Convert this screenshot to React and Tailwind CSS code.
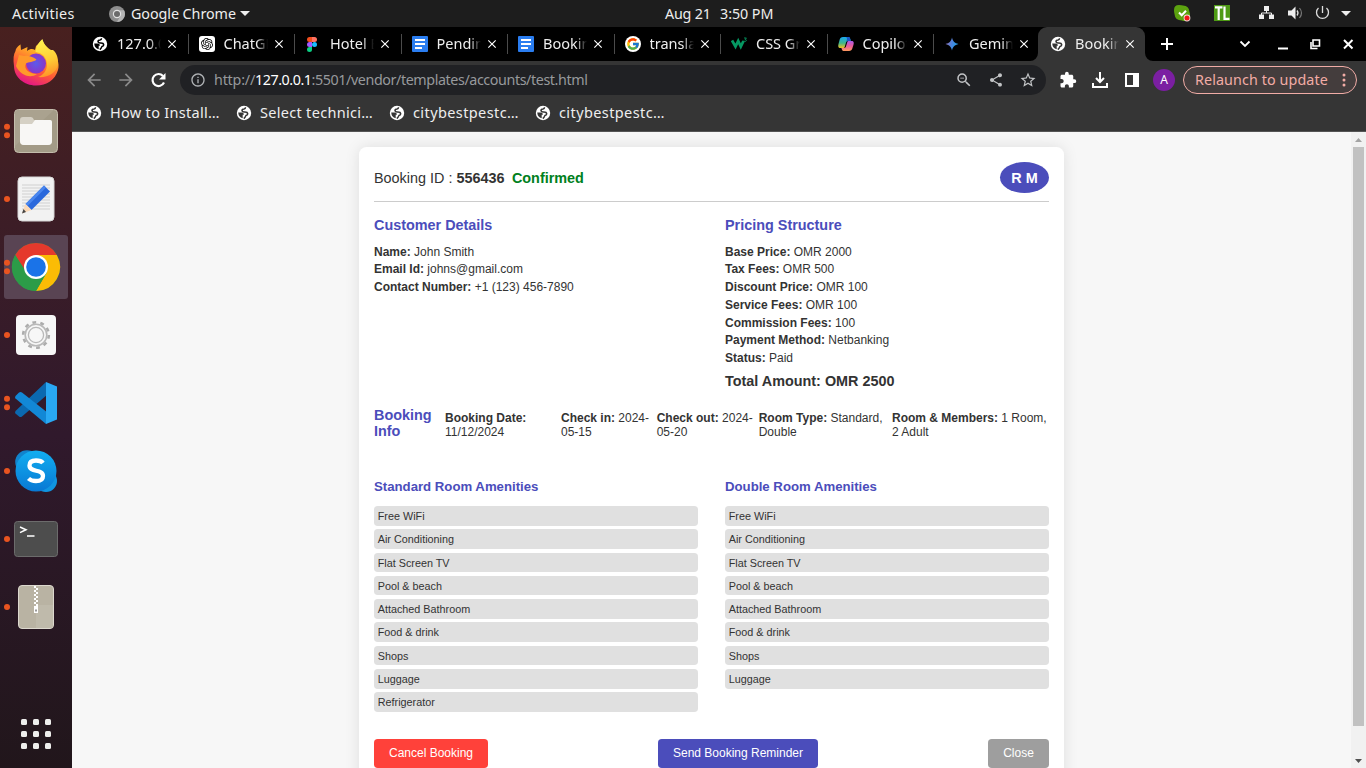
import React from "react";
import {
  MdExtension, MdZoomOut, MdShare, MdStarBorder, MdInfoOutline,
  MdArrowBack, MdArrowForward, MdClose,
} from "react-icons/md";
import { SiOpenai } from "react-icons/si";
import { FcGoogle } from "react-icons/fc";

const Figma = () => (
  <svg width="10" height="15" viewBox="0 0 10 15" className="ml-[2px]">
    <path d="M2.5 0H5v5H2.5a2.5 2.5 0 0 1 0-5z" fill="#f24e1e" />
    <path d="M5 0h2.5a2.5 2.5 0 0 1 0 5H5z" fill="#ff7262" />
    <path d="M2.5 5H5v5H2.5a2.5 2.5 0 0 1 0-5z" fill="#a259ff" />
    <circle cx="7.5" cy="7.5" r="2.5" fill="#1abcfe" />
    <path d="M2.5 10H5v2.5A2.5 2.5 0 1 1 2.5 10z" fill="#0acf83" />
  </svg>
);
const Docs = () => (
  <svg width="16" height="16" viewBox="0 0 16 16">
    <rect width="16" height="16" rx="1" fill="#2a7df0" />
    <path d="M3 4h10M3 8h10M3 12h7" stroke="#fff" strokeWidth="2" />
  </svg>
);
const Google = () => (
  <span className="flex h-4 w-4 items-center justify-center rounded-full bg-white"><FcGoogle size={14} /></span>
);
const OpenAI = () => (
  <span className="flex h-4 w-4 items-center justify-center rounded-[3px] bg-white text-black"><SiOpenai size={12} /></span>
);
const W3 = () => (
  <svg width="16" height="16" viewBox="0 0 16 16" fill="none" stroke="#059862">
    <path d="M1 4.500l3.500 6L7.200 5l2.600 5.500L12.500 5" strokeWidth="2.800" />
    <path d="M13 2h2.400l-1.200 1.400c1.600 0 1.500 2 0 2-.8 0-1.200-.3-1.400-.8" strokeWidth=".9" />
  </svg>
);
const Copilot = () => (
  <svg width="16" height="16" viewBox="0 0 16 16">
    <defs>
      <linearGradient id="cpa" x1="0" y1="0" x2="0" y2="1"><stop stopColor="#1aa6f0" /><stop offset=".55" stopColor="#3db68a" /><stop offset="1" stopColor="#f4c120" /></linearGradient>
      <linearGradient id="cpb" x1="0" y1="0" x2="0" y2="1"><stop stopColor="#a85be8" /><stop offset=".5" stopColor="#e85a9c" /><stop offset="1" stopColor="#ff9a5c" /></linearGradient>
    </defs>
    <path d="M5 1h5.500c1.200 0 1.500 1 1.900 2.500L12.700 5H10c-1.200 0-1.700.6-2 1.700L6.700 11C6.500 11.700 6 12 5 12H2.500C0 12 0 9.800.5 8L1.700 3.500C2.200 2 3 1 5 1z" fill="url(#cpa)" />
    <path d="M10.500 1c1.200 0 1.500 1 1.900 2.500L12.700 5H10c-.8 0-1.300.3-1.600.8L9 3C9.200 2 8.500 1 7.700 1z" fill="#1858c8" />
    <path d="M11 15H5.500c-1.200 0-1.500-1-1.900-2.500L3.300 12H6c1.200 0 1.700-.6 2-1.700L9.300 6C9.500 5.300 10 5 11 5h2.500C16 5 16 7 15.500 8.800l-1.200 3.700C13.800 14 13 15 11 15z" fill="url(#cpb)" />
  </svg>
);
const Gemini = () => (
  <svg width="16" height="16" viewBox="0 0 16 16">
    <defs><linearGradient id="gem" x1="0" y1=".3" x2="1" y2=".6"><stop offset=".1" stopColor="#8a72b8" /><stop offset=".5" stopColor="#4a86e0" /><stop offset="1" stopColor="#1ba1e3" /></linearGradient></defs>
    <path d="M8 1.500C9 5.500 10.500 7 14.500 8 10.500 9 9 10.500 8 14.500 7 10.500 5.500 9 1.500 8 5.500 7 7 5.500 8 1.500z" fill="url(#gem)" />
  </svg>
);
const Globe = ({ ink = "#000", className = "" }) => (
  <svg width="16" height="16" viewBox="0 0 16 16" className={className}>
    <circle cx="8" cy="8" r="7.200" fill="#fff" />
    <path d="M9.500 2.200Q9.500 3.700 8 3.900 5.900 4.100 6 5.700 6.200 7.200 8.300 7.100 11.500 6.900 11.700 8.900 11.500 10.400 9.900 10.600 9.400 12.200 7.800 13.600" fill="none" stroke={ink} strokeWidth="1.500" />
    <path d="M2.200 7.400h3.300q2.700.3 2.300 2.300H6.700v3.500Q2.500 11.800 2.200 7.400z" fill={ink} />
  </svg>
);
const ActiveGlobe = () => <Globe ink="#353535" />;

const tabs = [
  ["127.0.0.1", Globe], ["ChatGPT", OpenAI], ["Hotel B", Figma], ["Pending", Docs], ["Booking", Docs],
  ["transla", Google], ["CSS Gri", W3], ["Copilot", Copilot], ["Gemini", Gemini],
];

function TabBody({ label, Icon }) {
  return (
    <>
      <span className="flex w-4 shrink-0 items-center">{React.createElement(Icon)}</span>
      <span className="ml-[9px] w-[44px] overflow-hidden whitespace-nowrap text-[14.500px] text-[#eeeeee] [mask-image:linear-gradient(to_right,#000_74%,transparent_100%)]">{label}</span>
      <MdClose size={14} className="ml-[4px] shrink-0 text-white" />
    </>
  );
}

function Tabs() {
  return (
    <div className="flex h-[34px] bg-black pl-[10px]">
      <div className="flex w-[956px] shrink-0">
        {tabs.map(([label, Icon], i) => (
          <div key={i} className="flex w-[106.500px] shrink-0 items-center pl-[10px]">
            <TabBody label={label} Icon={Icon} />
            {i < 8 && <span className="ml-auto h-5 w-px bg-[#4b4b4b]" />}
          </div>
        ))}
      </div>
      <div className="relative flex w-[107px] shrink-0 items-center rounded-t-[9px] bg-[#353535] pl-[12px]">
        <TabBody label="Booking" Icon={ActiveGlobe} />
        <svg width="8" height="8" viewBox="0 0 8 8" className="absolute bottom-0 -left-2"><path d="M8 0v8H0a8 8 0 0 0 8-8z" fill="#353535" /></svg>
        <svg width="8" height="8" viewBox="0 0 8 8" className="absolute -right-2 bottom-0"><path d="M0 0v8h8A8 8 0 0 1 0 0z" fill="#353535" /></svg>
      </div>
      <svg width="221" height="34" viewBox="1145 27 221 34" fill="none" stroke="#fff" strokeWidth="2" className="shrink-0">
        <path d="M1161 44h12M1167 38v12" />
        <path d="M1240.500 41.500l4.500 4.500 4.500-4.500" strokeWidth="1.800" />
        <path d="M1278 48.500h10" />
        <path d="M1313 40h6.500v6H1313z" strokeWidth="1.600" />
        <path d="M1311 42v6.500h6.500" strokeWidth="1.600" />
        <path d="M1344 40l8.500 8.500M1352.500 40l-8.500 8.500" />
      </svg>
    </div>
  );
}

function Toolbar() {
  return (
    <div className="flex h-[38px] items-center bg-[#353535] text-white">
      <MdArrowBack size={20} className="ml-[12px] text-[#8b8b8b]" />
      <MdArrowForward size={20} className="ml-[12px] text-[#8b8b8b]" />
      <svg width="21" height="20" viewBox="0 0 21 20" className="ml-[12px] shrink-0">
        <path d="M15 6A6 6 0 1 0 16 12.500" fill="none" stroke="#fff" strokeWidth="2.200" />
        <path d="M17.500 3v6.500H11z" fill="#fff" />
      </svg>
      <div className="ml-[11px] flex h-[30px] w-[866px] shrink-0 items-center rounded-full bg-[#202124] pl-[10px] pr-[9px]">
        <MdInfoOutline size={16} className="text-[#b0b3b6]" />
        <span className="ml-[8px] whitespace-nowrap text-[14.300px] tracking-[-0.430px] text-[#97999c]"><span className="tracking-[-0.200px]">http://</span><span className="tracking-[-0.450px] text-white">127.0.0.1</span><span className="tracking-[-0.410px]">:5501/vendor/templates/accounts/test.html</span></span>
        <MdZoomOut size={18} className="ml-auto text-[#c2c4c6]" />
        <MdShare size={16} className="ml-[15px] text-[#c2c4c6]" />
        <MdStarBorder size={18} className="ml-[15px] text-[#c2c4c6]" />
      </div>
      <MdExtension size={18} className="ml-[13px]" />
      <svg width="18" height="18" viewBox="0 0 18 18" fill="none" stroke="#fff" strokeWidth="2" className="ml-[14px]">
        <path d="M9 1v9M5 7l4 4 4-4M2 12v4h14v-4" />
      </svg>
      <svg width="16" height="16" viewBox="0 0 16 16" className="ml-[15px]"><path d="M1 1h14v14H1zM3 3v10h6V3z" fill="#fff" fillRule="evenodd" /></svg>
      <span className="ml-[13px] flex h-[22px] w-[22px] items-center justify-center rounded-full bg-[#7b1fa2] text-[12px]">A</span>
      <span className="ml-[8px] flex h-7 w-[174px] items-center rounded-full border border-[#f0aca6] bg-[#443d3d] pl-[11px] text-[#f2aca6]">
        <span className="whitespace-nowrap text-[14.300px] tracking-[0.110px]">Relaunch to update</span>
        <svg width="4" height="16" viewBox="0 0 4 16" fill="currentColor" className="ml-auto mr-[10px]"><circle cx="2" cy="3" r="1.500" /><circle cx="2" cy="8" r="1.500" /><circle cx="2" cy="13" r="1.500" /></svg>
      </span>
    </div>
  );
}

function Bookmarks() {
  return (
    <div className="flex h-[33px] items-center border-b border-[#555555] bg-[#353535] pb-[4px] pl-[14px] text-[14.500px] tracking-[0.350px] text-[#eeeeee]">
      <Globe ink="#353535" /><span className="ml-[8px] w-[118px] whitespace-nowrap tracking-[0.300px]">How to Install…</span>
      <Globe ink="#353535" className="ml-[8px]" /><span className="ml-[8px] w-[118px] whitespace-nowrap tracking-[0.300px]">Select technici…</span>
      <Globe ink="#353535" className="ml-[11px]" /><span className="ml-[8px] w-[118px] whitespace-nowrap tracking-[0.400px]">citybestpestc…</span>
      <Globe ink="#353535" className="ml-[4px]" /><span className="ml-[8px] w-[118px] whitespace-nowrap tracking-[0.400px]">citybestpestc…</span>
    </div>
  );
}

function TopBar() {
  return (
    <div className="flex h-[27px] shrink-0 items-center bg-[#1d1d1d] text-[14.300px] text-[#eeeeee]">
      <span className="ml-[12px] w-[97px] tracking-[0.300px]">Activities</span>
      <svg width="16" height="16" viewBox="0 0 16 16"><circle cx="8" cy="8" r="8" fill="#8d8d8d" /><path d="M8 4.200h7A8 8 0 0 1 8 16l3.400-6z" fill="#b4b4b4" /><circle cx="8" cy="8" r="4.200" fill="#e2e2e2" /><circle cx="8" cy="8" r="3" fill="#6b6b6b" /></svg>
      <span className="ml-[6px] w-[105px] whitespace-nowrap tracking-[-0.050px]">Google Chrome</span>
      <svg width="10" height="5" viewBox="0 0 10 5" className="ml-[4px]"><path d="M0 0h10L5 5z" fill="#eee" /></svg>
      <span className="ml-[415px] w-[55px] whitespace-nowrap tracking-[-0.200px]">Aug 21</span>
      <span className="w-[60px] whitespace-nowrap tracking-[-0.050px]">3:50 PM</span>
      <svg width="206" height="27" viewBox="1160 0 206 27" className="ml-auto shrink-0">
        <path d="M1174 10q0-5 5-5q3 0 4 .6q6 0 6.500 6.500q.8 2 .5 4q-.5 5-5 5q-2 0-3-.6q-7 0-7.500-6.500q-.5-2-.5-4z" fill="#5ca20f" />
        <path d="M1179 12.500l2.700 2.700 4.300-4.500" fill="none" stroke="#fff" strokeWidth="2" />
        <circle cx="1187" cy="18" r="3.400" fill="#f3dada" /><circle cx="1187" cy="18" r="2.500" fill="#f01818" />
        <rect x="1214" y="5" width="16" height="16" fill="#4e9a14" />
        <path d="M1215 7.300h7.500M1218.700 6.500V20M1224.500 6.500v12.300h5" stroke="#fff" strokeWidth="2.200" fill="none" />
        <path d="M1264 6h5v5h-5zM1259 14.500h5v4.500h-5zM1269 14.500h5v4.500h-5z" fill="#eee" />
        <path d="M1266.500 11v2M1261.500 15v-2h10v2" stroke="#eee" fill="none" />
        <path d="M1288 10.500h3.500l4-4v13l-4-4h-3.500z" fill="#eee" />
        <path d="M1297 10.500q2 2.500 0 5" stroke="#ddd" fill="none" strokeWidth="1.300" />
        <path d="M1299.500 8q4 5 0 10" stroke="#777" fill="none" strokeWidth="1.200" />
        <path d="M1318.500 8a6 6 0 1 0 8 0M1322.500 6v7" stroke="#ddd" fill="none" strokeWidth="1.300" />
        <path d="M1341 11h10l-5 5z" fill="#eee" />
      </svg>
    </div>
  );
}

const dock = [
  { dots: 0, art: (
    <>
      <defs>
        <linearGradient id="ff" x1=".8" y1="0" x2=".35" y2="1"><stop stopColor="#fff44f" /><stop offset=".35" stopColor="#ffa827" /><stop offset=".65" stopColor="#ff5a36" /><stop offset="1" stopColor="#e31587" /></linearGradient>
        <radialGradient id="ffb"><stop stopColor="#5b5bea" /><stop offset="1" stopColor="#8a35c8" /></radialGradient>
        <linearGradient id="ffy" x1=".3" y1="0" x2=".5" y2="1"><stop stopColor="#fff44f" /><stop offset=".6" stopColor="#ffcb35" /><stop offset="1" stopColor="#ff9228" /></linearGradient>
      </defs>
      <path d="M15.500 20C16 16 20.500 13.500 20.500 13.500L21 19 27.500 16 27 20C31 17 33 18 35 19L36 15 42.500 9Q44 14 50 20C57 25 60 32 58 39C55 49 47 54.500 36 54.500C24 54.500 14 46 14 35C13 28 13.500 23 15.500 20z" fill="url(#ff)" />
      <circle cx="36" cy="32.500" r="10" fill="url(#ffb)" />
      <path d="M42.500 8C43 13 48 17 51 19L53 19C57 22 58.500 28 58 33C57 42 47 47 38 46C49 42 49 30 43 24C39 21 35.500 21 35.500 21C36 17 37 13 42.500 8z" fill="url(#ffy)" />
      <path d="M19 24L24 25Q30 24 36.500 28.500C34 31.500 28 30.500 26 32.500C23 37.500 29 43 37 43C30 48 20 44 16 35z" fill="#ff9a2a" />
    </>) },
  { dots: 2, art: (
    <>
      <rect x="14.500" y="10.500" width="43" height="43" rx="4" fill="#a39b87" stroke="#c4bdac" />
      <path d="M15 47L54 11H19q-4 0-4 4z" fill="#aaa28f" />
      <path d="M20 21q0-3 3-3h8q2 0 3 3h15q3 0 3 3v18q0 4-4 4H24q-4 0-4-4z" fill="#d5d0c4" />
      <path d="M20 25h12l3-4h15q2 0 2 2v19q0 4-4 4H24q-4 0-4-4z" fill="#f8f7f5" />
    </>) },
  { dots: 1, art: (
    <>
      <rect x="18" y="10" width="36" height="44" rx="4" fill="#f2f2f2" stroke="#d7d7d7" />
      <path d="M22 18h28M22 21h28M22 24h28M22 27h28M22 30h28M22 33h28M22 36h28M22 39h28M22 42h28" stroke="#d0d0d0" />
      <path d="M25.500 37L44 18.500 50 24.500 31.500 43z" fill="#2a68dc" />
      <path d="M25.500 37L44 18.500 46 20.500 27.500 39z" fill="#4a86ee" />
      <path d="M25.500 37L31.500 43 22 46.500z" fill="#fbd9b8" /><path d="M23.500 42l2.500 3-4 1.500z" fill="#444" />
    </>) },
  { dots: 2, active: true, art: (
    <>
      <circle cx="36" cy="32" r="24" fill="#2c9c48" />
      <path d="M15.200 20A24 24 0 0 1 56.800 20H36L27 38z" fill="#e5392c" />
      <path d="M56.800 20A24 24 0 0 1 36 56L47 37 36 20z" fill="#fbbc05" />
      <path d="M15.200 20L25.600 38 36 44 46.400 38 36 56A24 24 0 0 1 15.200 20z" fill="#2c9c48" />
      <circle cx="36" cy="32" r="12" fill="#fff" /><circle cx="36" cy="32" r="9.800" fill="#1a73e8" />
    </>) },
  { dots: 1, art: (
    <>
      <rect x="16" y="12" width="40" height="40" rx="4" fill="#f7f7f7" />
      <circle cx="36" cy="32" r="12.800" fill="none" stroke="#adadad" strokeWidth="2.600" strokeDasharray="3.800 4.242" />
      <circle cx="36" cy="32" r="10.800" fill="none" stroke="#b9b9b9" strokeWidth="1.600" />
      <circle cx="36" cy="32" r="7.600" fill="none" stroke="#b9b9b9" strokeWidth="1.300" />
    </>) },
  { dots: 2, art: (
    <>
      <path d="M15.500 40L46 11 48 23 22 45.500q-1.500 1-3 0L15.500 42.500q-1-1 0-2.500z" fill="#0b69b0" />
      <path d="M15.500 25L19 21.500q1.500-1 3 0L48 42 46 53 15.500 27.500q-1-1 0-2.500z" fill="#1288d6" />
      <path d="M46 11L57 15.500V48.500L46 53z" fill="#29a8f3" />
    </>) },
  { dots: 1, art: (
    <>
      <defs><linearGradient id="sk" x1="0" y1="0" x2="0" y2="1"><stop stopColor="#12aef0" /><stop offset="1" stopColor="#0878d4" /></linearGradient></defs>
      <circle cx="27" cy="23" r="11.800" fill="#1183cc" /><circle cx="46" cy="42" r="11" fill="#1095e0" />
      <circle cx="36" cy="32" r="20.500" fill="url(#sk)" />
      <path d="M43 24Q41 21.500 36 21.500Q29.500 21.500 29.500 26.500C29.500 34 43 29.500 43 37Q43 42 36 42Q31 42 28.500 39.500" stroke="#fff" strokeWidth="4.300" fill="none" />
    </>) },
  { dots: 1, art: (
    <>
      <rect x="14.500" y="14.500" width="43" height="35" rx="3" fill="#4d4d4d" stroke="#6c6c6c" />
      <path d="M20 20l6 2.800-6 2.800M27 29h7.500" stroke="#fff" strokeWidth="1.500" fill="none" />
    </>) },
  { dots: 1, art: (
    <>
      <rect x="18.500" y="10.500" width="35" height="43" rx="3.500" fill="#b9b3a3" stroke="#dcd8ce" />
      <path d="M36 30h17v20q0 3-3 3H36z" fill="#bfbaab" />
      <path d="M35 11v20" stroke="#fff" strokeWidth="2" strokeDasharray="2 2" /><path d="M37 13v18" stroke="#fff" strokeWidth="2" strokeDasharray="2 2" />
      <path d="M34 31h4v7h-4z" fill="#fff" /><path d="M35 34.500h2v2h-2z" fill="#999" />
    </>) },
];

function Dock() {
  return (
    <div className="flex w-[72px] shrink-0 flex-col bg-linear-to-b from-[#48201f] via-[#30192c] via-55% to-[#21161b] pt-[2px]">
      {dock.map((d, i) => (
        <svg key={i} width="72" height="68" viewBox="0 -2 72 68" className="shrink-0">
          {d.active && <rect x="4" y="0" width="64" height="64" rx="3" fill="#594453" />}
          {d.dots === 1 && <circle cx="7" cy="32" r="3" fill="#e95420" />}
          {d.dots === 2 && <><circle cx="7" cy="27.700" r="3" fill="#e95420" /><circle cx="7" cy="36.300" r="3" fill="#e95420" /></>}
          {d.art}
        </svg>
      ))}
      <div className="mb-[19px] ml-[21px] mt-auto grid w-[30px] grid-cols-3 gap-[6px]">
        {Array.from({ length: 9 }, (_, i) => <span key={i} className="h-[6px] w-[6px] rounded-[1.500px] bg-[#eeeeec]" />)}
      </div>
    </div>
  );
}

const customer = [["Name:", "John Smith"], ["Email Id:", "johns@gmail.com"], ["Contact Number:", "+1 (123) 456-7890"]];
const pricing = [["Base Price:", "OMR 2000"], ["Tax Fees:", "OMR 500"], ["Discount Price:", "OMR 100"], ["Service Fees:", "OMR 100"], ["Commission Fees:", "100"], ["Payment Method:", "Netbanking"], ["Status:", "Paid"]];
const amenities = ["Free WiFi", "Air Conditioning", "Flat Screen TV", "Pool & beach", "Attached Bathroom", "Food & drink", "Shops", "Luggage", "Refrigerator"];

const Rows = ({ items }) => (
  <div className="pt-[0.700px] text-[12px]">
    {items.map(([k, v]) => <p key={k} className="h-[17.750px] leading-[13px]"><b>{k}</b> {v}</p>)}
  </div>
);

const Amenities = ({ title, items }) => (
  <div className="w-[324px]">
    <h3 className="text-[13.200px] leading-[15px] font-bold text-[#4b4dbb]">{title}</h3>
    <ul className="mt-[12px] flex flex-col gap-[3.800px]">
      {items.map((a) => <li key={a} className="h-[19.500px] rounded-[3.750px] bg-[#e0e0e0] pl-[3.750px] text-[10.800px] leading-[21.500px]">{a}</li>)}
    </ul>
  </div>
);

function Card() {
  return (
    <div className="mx-auto mt-[15px] h-[700px] w-[705px] shrink-0 rounded-[7.500px] bg-white p-[15px] text-[#333333] shadow-[0_0_15px_rgba(0,0,0,0.1)]">
      <div className="flex h-[40px] items-start justify-between border-b border-[#cccccc]">
        <p className="mt-[8px] text-[14.400px] leading-[17px]">Booking ID : <b>556436</b><b className="ml-[7.500px] text-[#008020]">Confirmed</b></p>
        <span className="flex h-[31px] w-[49px] items-center justify-center rounded-[50%] bg-[#4b4dbb] pt-[2px] text-[14.400px] leading-[17px] font-bold text-white">R M</span>
      </div>
      <div className="flex h-[205px] pt-[15px]">
        <div className="w-[351px]">
          <h2 className="mb-[11px] text-[14.400px] leading-[17px] font-bold text-[#4b4dbb]">Customer Details</h2>
          <Rows items={customer} />
        </div>
        <div>
          <h2 className="mb-[11px] text-[14.400px] leading-[17px] font-bold text-[#4b4dbb]">Pricing Structure</h2>
          <Rows items={pricing} />
          <p className="mt-[3px] text-[14.400px] leading-[17px] font-bold">Total Amount: OMR 2500</p>
        </div>
      </div>
      <div className="flex h-[72px] text-[12px] leading-[14px]">
        <h2 className="w-[71px] shrink-0 text-[14.400px] leading-[16px] font-bold text-[#4b4dbb]">Booking<br />Info</h2>
        <p className="mt-[4px] w-[116px]"><b>Booking Date:</b><br />11/12/2024</p>
        <p className="mt-[4px] w-[95.700px]"><b>Check in:</b> 2024-<br />05-15</p>
        <p className="mt-[4px] w-[102px]"><b>Check out:</b> 2024-<br />05-20</p>
        <p className="mt-[4px] w-[133.300px]"><b>Room Type:</b> Standard,<br />Double</p>
        <p className="mt-[4px] whitespace-nowrap"><b>Room &amp; Members:</b> 1 Room,<br />2 Adult</p>
      </div>
      <div className="flex h-[260px] justify-between">
        <Amenities title="Standard Room Amenities" items={amenities} />
        <Amenities title="Double Room Amenities" items={amenities.slice(0, 8)} />
      </div>
      <div className="flex justify-between text-[12px] leading-[14px] text-white">
        <button className="h-[29px] w-[114px] rounded-[3.750px] bg-[#ff413a] pb-[1.500px]">Cancel Booking</button>
        <button className="h-[29px] w-[160px] rounded-[3.750px] bg-[#4b4dbb] pb-[1.500px]">Send Booking Reminder</button>
        <button className="h-[29px] w-[61px] rounded-[3.750px] bg-[#9e9e9e] pb-[1.500px]">Close</button>
      </div>
    </div>
  );
}

export default function App() {
  return (
    <div className="flex h-[768px] w-[1366px] flex-col overflow-hidden font-['Noto_Sans',sans-serif]">
      <TopBar />
      <div className="flex min-h-0 flex-1">
        <Dock />
        <div className="flex min-w-0 flex-1 flex-col">
          <Tabs />
          <Toolbar />
          <Bookmarks />
          <div className="flex min-h-0 flex-1 bg-[#f7f7f7]">
            <div className="flex flex-1 flex-col overflow-hidden font-['Liberation_Sans',Arial,sans-serif]"><Card /></div>
            <div className="flex w-[15px] flex-col items-center bg-[#f1f1f1]">
              <svg width="15" height="15" viewBox="0 0 15 15"><path d="M4 10h7L7.500 6z" fill="#a3a3a3" /></svg>
              <div className="h-[579px] w-[11px] bg-[#c1c1c1]" />
              <svg width="15" height="15" viewBox="0 0 15 15" className="mt-auto"><path d="M4 6h7l-3.500 4z" fill="#505050" /></svg>
            </div>
          </div>
        </div>
      </div>
    </div>
  );
}
